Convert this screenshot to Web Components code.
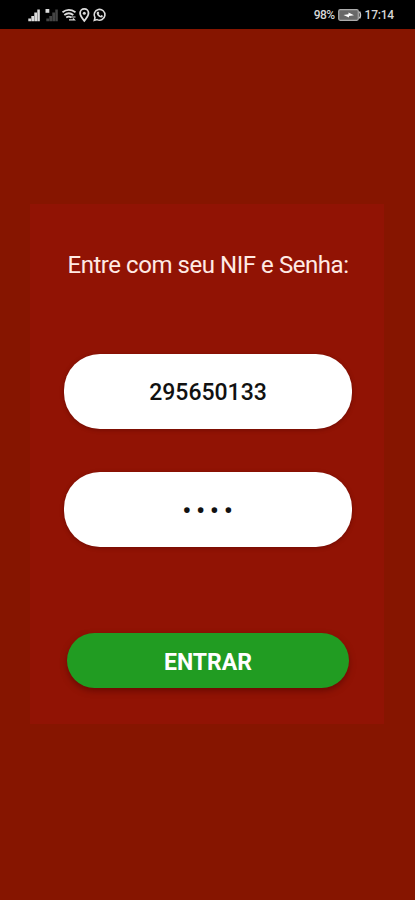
<!DOCTYPE html>
<html lang="pt">
<head>
<meta charset="utf-8">
<meta name="viewport" content="width=device-width, initial-scale=1">
<title>Entrar</title>
<style>
    body {
        margin:0;
        background:#861500;
        font-family:Roboto, "Liberation Sans", sans-serif;
    }
</style>
</head>
<body>
<login-screen>
    <status-bar slot="status" battery="98%" time="17:14"></status-bar>
    <login-card>
        <span slot="title">Entre com seu NIF e Senha:</span>
        <login-field>295650133</login-field>
        <login-field secret>••••</login-field>
        <login-button slot="action">ENTRAR</login-button>
    </login-card>
</login-screen>

<script>
// STATUS BAR
var template_status = document.createElement("template");
template_status.innerHTML = `
<style>
    :host {
        display:flex;
        justify-content:space-between;
        align-items:center;
        box-sizing:border-box;
        height:29px;
        padding:1px 21px 0 28px;
        background:#000;
        color:#d6d6d6;
        font-size:12px;
        font-weight:500;
    }
    svg {
        display:block;
    }
    .icons, .info {
        display:flex;
        align-items:center;
    }
    #battery {
        letter-spacing:-0.6px;
    }
    #time {
        letter-spacing:-0.2px;
    }
    .cell {
        margin:0 3px 0 3px;
    }
</style>
<div class="icons">
    <svg width="80" height="16" viewBox="0 0 80 16">
        <g fill="#dcdcdc">
            <path d="M0.300 11.500h2.700v2.700h-2.700zM3.300 9h2.700v5.200h-2.700zM6.300 5.500h2.700v8.700h-2.700zM9.300 2.500h2.500v11.700h-2.500z"/>
            <path d="M17.500 2h3.800v3.800h-3.800z"/>
        </g>
        <path fill="#444" d="M18.300 11.500h2.700v2.700h-2.700zM21.300 9h2.700v5.200h-2.700zM24.300 5.500h2.700v8.700h-2.700zM27.300 2.500h2.500v11.700h-2.500z"/>
        <g fill="none" stroke="#dcdcdc" stroke-width="1.800">
            <path d="M34.500 5.200q6-4.600 13 0M36.300 8q4.600-3.500 9 0M38.200 10.600q2.600-1.900 5 0"/>
            <path d="M41 12.900h5.500l-1.500-1.500M47.500 10h-5" stroke-width="1.200"/>
            <path d="M56.300 13.900q-4.200-5-4.200-7.800a4.200 4.200 0 0 1 8.400 0q0 2.800-4.200 7.800z" stroke-width="1.800"/>
            <path d="M66.300 13.400l.7-2.700a5.400 5.400 0 1 1 2.100 1.900z" stroke-width="1.600"/>
        </g>
        <circle cx="56.300" cy="6.200" r="1.500" fill="#dcdcdc"/>
        <path d="M69.500 4.700l1.200.1.600 1.500-.7.800q.8 1.300 2 1.800l.8-.8 1.500.7q.1 1.700-1.500 1.800-3.200-.1-4.700-3.800-.2-1.500.8-2.100z" fill="#dcdcdc"/>
    </svg>
</div>
<div class="info">
    <span id="battery"></span>
    <svg class="cell" width="24" height="12" viewBox="0 0 24 12">
        <rect x="0.700" y="0.700" width="19.600" height="10.600" rx="1.500" fill="#686868" stroke="#ababab" stroke-width="1.200"/>
        <path d="M21.500 2.500q1.800 3.500 0 7" fill="none" stroke="#c8c8c8" stroke-width="1.600"/>
        <path d="M5.500 6l5-.8v-1.700l5.500 2.700-5 .8v1.500z" fill="#fff"/>
    </svg>
    <span id="time"></span>
</div>
`;

class StatusBar extends HTMLElement {
    constructor(){
        super();
        this.attachShadow({mode:"open"});
    }

    connectedCallback(){
        this.shadowRoot.appendChild(template_status.content.cloneNode(true));
        this.shadowRoot.querySelector("#battery").textContent = this.getAttribute("battery");
        this.shadowRoot.querySelector("#time").textContent = this.getAttribute("time");
    }
}
customElements.define("status-bar", StatusBar);

// SCREEN
var template_screen = document.createElement("template");
template_screen.innerHTML = `
<style>
    :host {
        display:flex;
        flex-direction:column;
        height:100vh;
        background:#861500;
    }
    main {
        flex:1;
        padding:175px 31px 0 30px;
    }
</style>
<slot name="status"></slot>
<main><slot></slot></main>
`;

class LoginScreen extends HTMLElement {
    constructor(){
        super();
        this.attachShadow({mode:"open"});
        this.shadowRoot.appendChild(template_screen.content.cloneNode(true));
    }
}
customElements.define("login-screen", LoginScreen);

// CARD
var template_card = document.createElement("template");
template_card.innerHTML = `
<style>
    :host {
        display:flex;
        flex-direction:column;
        box-sizing:border-box;
        height:520px;
        padding:46px 32px 36px 34px;
        background:#911304;
    }
    h1 {
        margin:0 0 74px;
        color:#ffeae4;
        font-size:24px;
        line-height:30px;
        font-weight:400;
        letter-spacing:-0.45px;
        text-align:center;
        white-space:nowrap;
    }
    .fields {
        display:flex;
        flex-direction:column;
        gap:43px;
    }
    .action {
        margin:auto 3px 0;
    }
</style>
<h1><slot name="title"></slot></h1>
<div class="fields"><slot></slot></div>
<div class="action"><slot name="action"></slot></div>
`;

class LoginCard extends HTMLElement {
    constructor(){
        super();
        this.attachShadow({mode:"open"});
        this.shadowRoot.appendChild(template_card.content.cloneNode(true));
    }
}
customElements.define("login-card", LoginCard);

// FIELD
var template_field = document.createElement("template");
template_field.innerHTML = `
<style>
    :host {
        display:flex;
        align-items:center;
        justify-content:center;
        box-sizing:border-box;
        height:75px;
        padding-top:2px;
        border-radius:36px;
        background:#fff;
        box-shadow:0 1px 4px rgba(70,0,0,0.45);
        color:#111;
        font-size:23px;
        font-weight:500;
    }
    :host([secret]) {
        font-size:24px;
        font-weight:700;
        letter-spacing:5.200px;
        text-indent:4.200px;
    }
</style>
<span><slot></slot></span>
`;

class LoginField extends HTMLElement {
    constructor(){
        super();
        this.attachShadow({mode:"open"});
        this.shadowRoot.appendChild(template_field.content.cloneNode(true));
    }
}
customElements.define("login-field", LoginField);

// BUTTON
var template_button = document.createElement("template");
template_button.innerHTML = `
<style>
    :host {
        display:block;
    }
    button {
        display:block;
        width:100%;
        height:55px;
        padding:3px 0 0;
        border:0;
        border-radius:28px;
        background:#219c22;
        box-shadow:0 3px 6px rgba(70,0,0,0.5);
        color:#fff;
        font:700 23px Roboto, "Liberation Sans", sans-serif;
    }
</style>
<button type="button"><slot></slot></button>
`;

class LoginButton extends HTMLElement {
    constructor(){
        super();
        this.attachShadow({mode:"open"});
        this.shadowRoot.appendChild(template_button.content.cloneNode(true));
    }
}
customElements.define("login-button", LoginButton);
</script>
</body>
</html>
